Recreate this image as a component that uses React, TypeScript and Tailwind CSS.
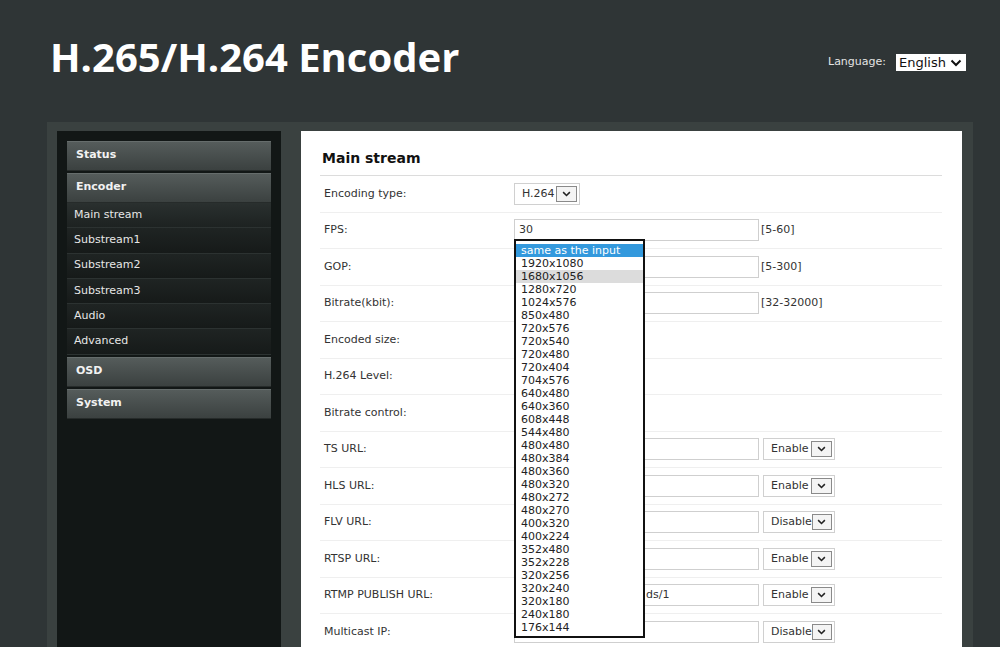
import React from 'react';

const sans = { fontFamily: '"DejaVu Sans", Verdana, sans-serif' };

const resolutions = [
  '1920x1080', '1680x1056', '1280x720', '1024x576', '850x480', '720x576', '720x540', '720x480',
  '720x404', '704x576', '640x480', '640x360', '608x448', '544x480', '480x480', '480x384', '480x360',
  '480x320', '480x272', '480x270', '400x320', '400x224', '352x480', '352x228', '320x256', '320x240',
  '320x180', '240x180', '176x144',
];

const Chevron = ({ className = '' }: { className?: string }) => (
  <svg viewBox="0 0 12 8" className={className} fill="none" stroke="currentColor" strokeWidth="2">
    <polyline points="1.5,1.5 6,6 10.5,1.5" />
  </svg>
);

const BoxArrow = () => (
  <span className="flex h-[16px] w-[21px] items-center justify-center border border-[#8a8a8a] bg-[#f4f4f4] text-[#222]">
    <Chevron className="h-[6px] w-[9px]" />
  </span>
);

const Select = ({ value, w }: { value: string; w: string }) => (
  <div className={`flex h-[22px] items-center justify-between border border-[#d0d0d0] bg-white pl-[7px] pr-[2px] text-[11px] text-[#333] ${w}`}>
    <span>{value}</span>
    <BoxArrow />
  </div>
);

const TextInput = ({ value = '', indent = '' }: { value?: string; indent?: string }) => (
  <div className={`flex h-[22px] w-[245px] items-center overflow-hidden whitespace-nowrap border border-[#cfcfcf] bg-white px-[4px] text-[11px] text-[#333] ${indent}`}>
    {value}
  </div>
);

const Row = ({ label, children }: { label: string; children?: React.ReactNode }) => (
  <div className="flex h-[36.5px] items-center border-b border-[#efefef]">
    <div className="w-[194px] pl-[4px] text-[11px] text-[#333]">{label}</div>
    <div className="flex items-center">{children}</div>
  </div>
);

const Range = ({ text }: { text: string }) => (
  <span className="ml-[2px] text-[11px] text-[#333]">{text}</span>
);

const UrlRow = ({ label, state, value, indent }: { label: string; state: string; value?: string; indent?: string }) => (
  <Row label={label}>
    <TextInput value={value} indent={indent} />
    <div className="ml-[4px]">
      <Select value={state} w="w-[72px]" />
    </div>
  </Row>
);

const NavHead = ({ label }: { label: string }) => (
  <div className="flex h-[30px] items-center border-b border-[#262b2a] bg-gradient-to-b from-[#565d5c] to-[#3b4140] pl-[9px] text-[11px] font-bold text-[#f2f2f2] shadow-[inset_0_1px_0_#666d6c]">
    {label}
  </div>
);

const NavSub = ({ label, active }: { label: string; active?: boolean }) => (
  <div
    className={`flex h-[25.3px] items-center border-b border-[#2c3231] pl-[7px] text-[11px] text-[#e6e6e6] ${
      active ? 'bg-gradient-to-b from-[#2a302f] to-[#1d2221]' : 'bg-gradient-to-b from-[#1f2423] to-[#161a19]'
    }`}
  >
    {label}
  </div>
);

export default function App() {
  return (
    <div className="h-[647px] w-[1000px] overflow-hidden bg-[#2f3536]" style={sans}>
      <div className="flex h-[122px] items-start justify-between pl-[50px] pr-[34px]">
        <h1
          className="mt-[31px] text-[40px] font-bold leading-[52px] text-white"
          style={{ fontFamily: '"Open Sans", "Noto Sans", sans-serif' }}
        >
          H.265/H.264 Encoder
        </h1>
        <div className="mt-[54px] flex items-center gap-[10px]">
          <span className="text-[11px] text-[#e4e4e4]">Language:</span>
          <div className="flex h-[17px] w-[70px] items-center justify-between bg-white pl-[3px] pr-[4px] text-[13px] text-[#111]">
            <span>English</span>
            <Chevron className="h-[8px] w-[12px]" />
          </div>
        </div>
      </div>

      <div className="ml-[47px] flex h-[600px] w-[926px] gap-[20px] bg-[#3a4140] pl-[10px] pt-[9px]">
        <div className="w-[224px] bg-[#121716] px-[10px] pt-[10px]">
          <div className="flex flex-col gap-[2px]">
            <NavHead label="Status" />
            <div>
              <NavHead label="Encoder" />
              <NavSub label="Main stream" active />
              <NavSub label="Substream1" />
              <NavSub label="Substream2" />
              <NavSub label="Substream3" />
              <NavSub label="Audio" />
              <NavSub label="Advanced" />
            </div>
            <NavHead label="OSD" />
            <NavHead label="System" />
          </div>
        </div>

        <div className="w-[661px] bg-white pl-[19px] pr-[20px]">
          <div className="flex h-[45px] items-center border-b border-[#dcdcdc] pt-[11px] pl-[2px] text-[14px] font-bold text-[#111]">
            Main stream
          </div>
          <Row label="Encoding type:">
            <Select value="H.264" w="w-[66px]" />
          </Row>
          <Row label="FPS:">
            <div className="relative">
              <TextInput value="30" />
              <div className="absolute left-0 top-[20px] z-10 w-[131px] border-2 border-[#111] bg-white pb-[2px] pt-[3px] text-[11px] leading-[13px] text-[#222]">
                <div className="bg-[#3399dd] pl-[5px] text-white">same as the input</div>
                {resolutions.map(r => (
                  <div key={r} className={`pl-[5px] ${r === '1680x1056' ? 'bg-[#dcdcdc]' : ''}`}>
                    {r}
                  </div>
                ))}
              </div>
            </div>
            <Range text="[5-60]" />
          </Row>
          <Row label="GOP:">
            <TextInput />
            <Range text="[5-300]" />
          </Row>
          <Row label="Bitrate(kbit):">
            <TextInput />
            <Range text="[32-32000]" />
          </Row>
          <Row label="Encoded size:" />
          <Row label="H.264 Level:" />
          <Row label="Bitrate control:" />
          <UrlRow label="TS URL:" state="Enable" />
          <UrlRow label="HLS URL:" state="Enable" />
          <UrlRow label="FLV URL:" state="Disable" />
          <UrlRow label="RTSP URL:" state="Enable" />
          <UrlRow label="RTMP PUBLISH URL:" state="Enable" value="ds/1" indent="pl-[131px]" />
          <UrlRow label="Multicast IP:" state="Disable" />
        </div>
      </div>
    </div>
  );
}
